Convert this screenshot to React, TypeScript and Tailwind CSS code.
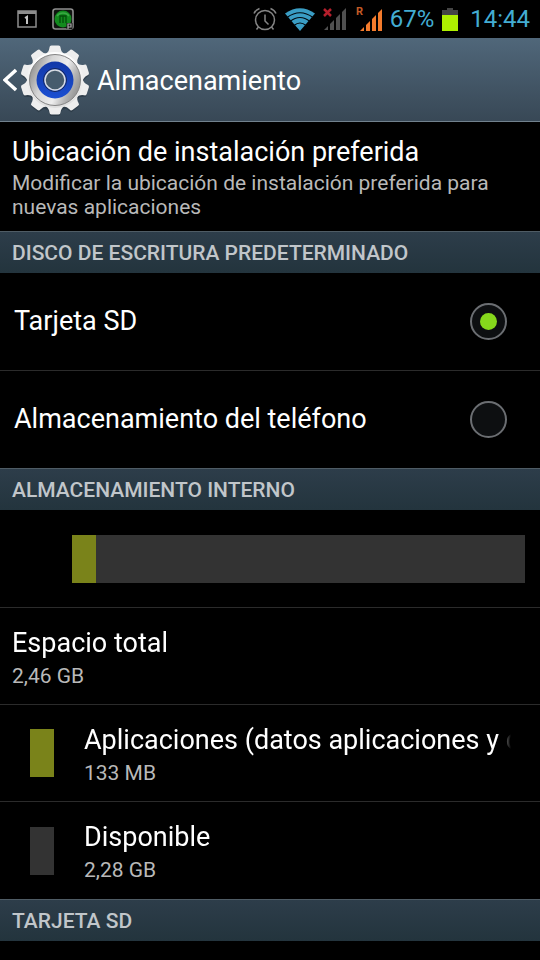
import React, { useState } from "react";

interface StorageRow {
  title: string;
  size: string;
  color?: string;
}

const rows: StorageRow[] = [
  { title: "Espacio total", size: "2,46 GB" },
  { title: "Aplicaciones (datos aplicaciones y contenido multimedia)", size: "133 MB", color: "bg-[#7a831a]" },
  { title: "Disponible", size: "2,28 GB", color: "bg-[#333333]" },
];

const disks = [
  { id: "sd", label: "Tarjeta SD" },
  { id: "phone", label: "Almacenamiento del teléfono" },
];

const usedPercent = (133 / (2.46 * 1024)) * 100;

const CalendarIcon = () => (
  <svg width="20" height="18" viewBox="0 0 20 18" fill="none">
    <rect x="1" y="1" width="18" height="16" stroke="#8d8d8d" strokeWidth="1.5" />
    <path d="M1 2.5h18" stroke="#8d8d8d" strokeWidth="3" />
    <path d="M8 8l2-1.2V14" stroke="#c4c4c4" strokeWidth="2" />
  </svg>
);

const AppIcon = () => (
  <svg width="22" height="22" viewBox="0 0 22 22" fill="none">
    <rect x="1" y="1" width="20" height="20" rx="2.5" fill="#101410" stroke="#8f8f8f" strokeWidth="1.6" />
    <circle cx="11" cy="11" r="8.500" fill="#128a1e" />
    <path d="M5 8a7 6 0 0 1 12 0" stroke="#39a843" strokeWidth="1.5" />
    <path d="M8 15V8h6v7M11 8v7" stroke="#034d0a" strokeWidth="1.3" />
    <path d="M14.500 15h6v6h-6z" fill="#161616" />
    <path d="M16 21v-5h3v3h-3" stroke="#a8a8a8" strokeWidth="1.2" />
  </svg>
);

const AlarmIcon = () => (
  <svg width="24" height="24" viewBox="0 0 24 24" fill="none" stroke="#858585" strokeWidth="1.5">
    <circle cx="12" cy="13" r="9.500" />
    <path d="M12 7.500V14l3.500 3.500M1 6.500Q2.500 3 6.500 1.500M23 6.500Q21.500 3 17.500 1.500M5.500 20l-2 2.500M18.500 20l2 2.500" />
  </svg>
);

const WifiIcon = () => (
  <svg width="30" height="23" viewBox="0 0 30 23" fill="none">
    <path d="M15 23L0 5.500Q15 -5 30 5.500Z" fill="#3a9dc4" />
    <path d="M2 9.500Q15 0 28 9.500M5 13.500Q15 5.500 25 13.500M9 17.500Q15 12.500 21 17.500" stroke="#00080d" strokeWidth="1.2" />
  </svg>
);

const NoSignalIcon = () => (
  <svg width="25" height="25" viewBox="0 0 25 25">
    <path d="M1 23l4-4v4zM7 17l4-4v10H7zM13 11l4-4v16h-4zM19 5l4-4v22h-4z" fill="#505050" />
    <path d="M1 2l7 7M8 2L1 9" stroke="#b51f2c" strokeWidth="2.500" />
  </svg>
);

const RoamingIcon = () => (
  <svg width="28" height="27" viewBox="0 0 28 27">
    <path d="M4 25l4-4v4zM10 19l4-4v10h-4zM16 13l4-4v16h-4zM22 7l4-4v22h-4z" fill="#f47b2c" />
    <text x="0" y="9" fill="#c45b26" fontFamily="Roboto, sans-serif" fontSize="11" fontWeight="700">R</text>
  </svg>
);

const BatteryIcon = () => (
  <svg width="16" height="23" viewBox="0 0 16 23">
    <path d="M5 0h6v2h5v6H0V2h5z" fill="#454545" />
    <path d="M0 7h16v16H0z" fill="#aef000" />
  </svg>
);

const teeth = [0, 36, 72, 108, 144, 180, 216, 252, 288, 324];

const GearIcon = () => (
  <svg width="70" height="72" viewBox="0 0 70 72">
    <defs>
      <linearGradient id="gear" x1="0" y1="0" x2="0" y2="1">
        <stop offset="0" stopColor="#ffffff" />
        <stop offset="1" stopColor="#dedede" />
      </linearGradient>
      <linearGradient id="ring" x1="0" y1="0.3" x2="1" y2="0.7">
        <stop offset="0" stopColor="#8f8f8f" />
        <stop offset="0.3" stopColor="#d6d6d6" />
        <stop offset="0.6" stopColor="#eeeeee" />
        <stop offset="0.8" stopColor="#b5b5b5" />
        <stop offset="1" stopColor="#8c8c8c" />
      </linearGradient>
      <linearGradient id="blue" x1="0" y1="0" x2="0" y2="1">
        <stop offset="0" stopColor="#1238a8" />
        <stop offset="1" stopColor="#1b4fd2" />
      </linearGradient>
    </defs>
    <g fill="#25323d" opacity="0.6">
      <circle cx="35" cy="38" r="29" />
      {teeth.map((a) => (
        <path key={a} d="M27 13L30.500 4h9L43 13z" transform={`rotate(${a} 35 38)`} />
      ))}
    </g>
    <g fill="#eeeeee">
      {teeth.map((a) => (
        <path key={a} d="M25.500 10Q29 8 29.500 3.500Q29.500 1.500 31.500 1.500h7Q40.500 1.500 40.500 3.500Q41 8 44.500 10z" transform={`rotate(${a} 35 36)`} />
      ))}
    </g>
    <circle cx="35" cy="36" r="28" fill="url(#gear)" />
    <circle cx="35" cy="36" r="25.500" fill="url(#ring)" stroke="#858585" strokeWidth="1" />
    <circle cx="35" cy="36" r="18.500" fill="url(#blue)" />
    <circle cx="35" cy="36" r="11.500" fill="none" stroke="#15255a" strokeWidth="1" />
    <circle cx="35" cy="36" r="10" fill="#465b6d" stroke="#d8dce2" strokeWidth="1.5" />
  </svg>
);

const StatusBar = () => (
  <div className="flex h-[38px] items-center justify-between pr-[10px] pl-[17px] text-[24px] leading-[40px] text-[#43add3]">
    <div className="flex items-center gap-[15px]">
      <CalendarIcon />
      <AppIcon />
    </div>
    <div className="flex items-center">
      <div className="flex items-center gap-2 pr-[6px]">
        <AlarmIcon />
        <WifiIcon />
        <NoSignalIcon />
        <RoamingIcon />
      </div>
      <span>67%</span>
      <span className="pr-3 pl-2">
        <BatteryIcon />
      </span>
      <span>14:44</span>
    </div>
  </div>
);

const SectionHeader: React.FC<{ children: string }> = ({ children }) => (
  <h2 className="h-[42px] border-t border-[#4f5c65] bg-linear-to-b from-[#2d3d4a] to-[#23343d] px-3 text-[21px] leading-[42px] font-medium text-[#c1c6ca]">
    {children}
  </h2>
);

export default function App() {
  const [disk, setDisk] = useState("sd");

  return (
    <div className="min-h-screen bg-black font-['Roboto',sans-serif] text-white">
      <StatusBar />
      <header className="flex h-[84px] items-center border-b border-[#71818d] bg-linear-to-b from-[#50677a] to-[#384856]">
        <button type="button" aria-label="Atrás" className="flex items-center pl-[3px]">
          <svg width="14" height="24" viewBox="0 0 14 24" fill="none">
            <path d="M13 2L2 12l11 10" stroke="#ffffff" strokeWidth="3.500" />
          </svg>
          <span className="pl-[3px]">
            <GearIcon />
          </span>
        </button>
        <h1 className="pt-1 pl-[7px] text-[27px]">Almacenamiento</h1>
      </header>

      <main>
        <section className="px-3 pt-[11px] pb-3">
          <h3 className="text-[27px] leading-[38px]">Ubicación de instalación preferida</h3>
          <p className="text-[21px] leading-[24px] text-[#b9b9b9]">
            Modificar la ubicación de instalación preferida para nuevas aplicaciones
          </p>
        </section>

        <SectionHeader>DISCO DE ESCRITURA PREDETERMINADO</SectionHeader>
        <div className="divide-y divide-[#2b2b2b]">
          {disks.map((d) => (
            <label key={d.id} className="flex items-center justify-between py-[30px] pr-[33px] pl-[14px] text-[27px] leading-[37px]">
              {d.label}
              <input
                type="radio"
                name="disk"
                checked={disk === d.id}
                onChange={() => setDisk(d.id)}
                className="grid size-[37px] appearance-none place-items-center rounded-full border-2 border-[#6b6e72] bg-[#0d0f11] before:size-[17px] before:rounded-full checked:before:bg-[#86d81c]"
              />
            </label>
          ))}
        </div>

        <SectionHeader>ALMACENAMIENTO INTERNO</SectionHeader>
        <div className="divide-y divide-[#2b2b2b]">
          <div className="pt-[25px] pr-[15px] pb-6 pl-[72px]">
            <div className="h-12 bg-[#333333]">
              <div className="h-12 bg-[#7a831a]" style={{ width: `${usedPercent}%` }} />
            </div>
          </div>
          {rows.map((row) => (
            <div key={row.title} className="flex h-[97px] items-center pr-[27px] pl-3">
              {row.color && <span className={`mr-[30px] ml-[18px] h-12 w-6 shrink-0 ${row.color}`} />}
              <div className="min-w-0 flex-1 pt-[3px]">
                {/* long titles fade out at the right edge */}
                <h3 className="overflow-hidden mask-r-from-[calc(100%-16px)] mask-r-to-[calc(100%-2px)] text-[27px] leading-[36px] whitespace-nowrap">
                  {row.title}
                </h3>
                <p className="text-[21px] leading-[30px] text-[#b9b9b9]">{row.size}</p>
              </div>
            </div>
          ))}
        </div>

        <SectionHeader>TARJETA SD</SectionHeader>
      </main>
    </div>
  );
}
